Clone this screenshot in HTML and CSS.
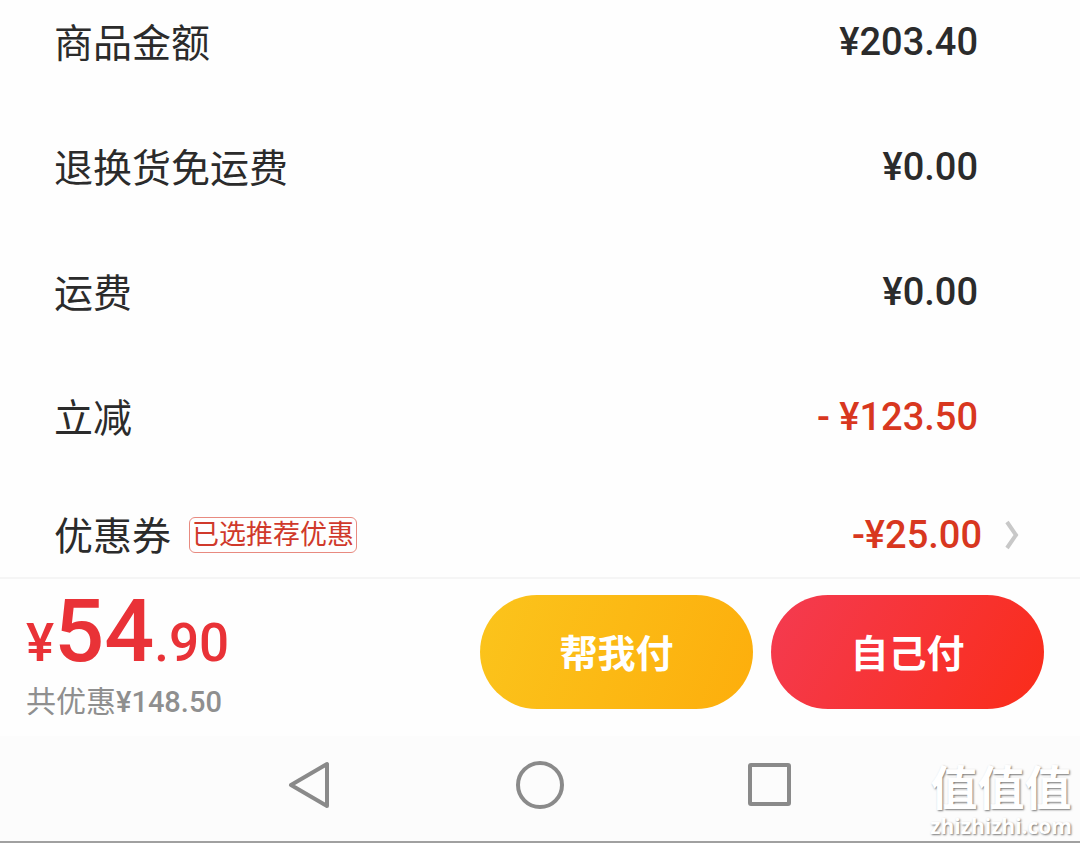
FILE: index.html
```html
<!DOCTYPE html>
<html lang="zh-CN">
<head>
    <meta charset="UTF-8">
    <meta name="viewport" content="width=device-width, initial-scale=1.0">
    <title>确认订单</title>
    <link rel="stylesheet" href="styles.css">
</head>
<body>
    <main class="summary">
        <div class="row">
            <span class="label">商品金额</span>
            <span class="amount">¥203.40</span>
        </div>
        <div class="row">
            <span class="label">退换货免运费</span>
            <span class="amount">¥0.00</span>
        </div>
        <div class="row">
            <span class="label">运费</span>
            <span class="amount">¥0.00</span>
        </div>
        <div class="row">
            <span class="label">立减</span>
            <span class="amount discount">- ¥123.50</span>
        </div>
        <a class="row coupon" href="#coupon">
            <span class="label">优惠券</span>
            <span class="tag">已选推荐优惠</span>
            <span class="amount discount">-¥25.00</span>
            <svg class="arrow" width="16" height="32" viewBox="0 0 16 32" fill="none" stroke="#c8c8c8" stroke-width="4">
                <path d="M3 3l9 13-9 13"/>
            </svg>
        </a>
    </main>

    <footer class="pay-bar">
        <div class="total">
            <div class="price">¥<span class="price-int">54</span>.90</div>
            <div class="saved">共优惠<span class="saved-num">¥148.50</span></div>
        </div>
        <button class="pay-btn pay-friend" type="button">帮我付</button>
        <button class="pay-btn pay-self" type="button">自己付</button>
    </footer>

    <nav class="system-nav">
        <button type="button" aria-label="返回">
            <svg width="56" height="56" viewBox="0 0 56 56">
                <path d="M45 7v42L9 28z"/>
            </svg>
        </button>
        <button type="button" aria-label="主页">
            <svg width="56" height="56" viewBox="0 0 56 56">
                <circle cx="28" cy="28" r="22"/>
            </svg>
        </button>
        <button type="button" aria-label="最近任务">
            <svg width="56" height="56" viewBox="0 0 56 56">
                <rect x="8" y="8" width="39" height="39" rx="1"/>
            </svg>
        </button>
        <div class="watermark">
            <span class="watermark-name">值值值</span>
            <span class="watermark-site">zhizhizhi.com</span>
        </div>
    </nav>
</body>
</html>
```

FILE: styles.css
```css
* {
    box-sizing: border-box;
}
body {
    margin: 0;
    min-height: 100vh;
    display: flex;
    flex-direction: column;
    background: #fefefe;
    color: #2b2b2b;
    font-family: Roboto, "Noto Sans CJK SC", sans-serif;
}
.summary {
    padding: 14px 60px 14px 54px;
}
.row {
    display: flex;
    align-items: center;
    height: 56px;
    margin-bottom: 69px;
    padding-right: 42px;
    color: inherit;
    text-decoration: none;
}
.row.coupon {
    margin-top: -7px;
    margin-bottom: 0;
    padding-right: 0;
}
.label {
    padding-bottom: 4px;
    font-size: 39px;
    line-height: 52px;
    font-family: "Noto Sans CJK SC", sans-serif;
}
.amount {
    margin-left: auto;
    font-size: 38px;
    font-weight: 500;
    line-height: 56px;
}
.discount {
    color: #d8371f;
}
.tag {
    margin-left: 18px;
    padding: 0 2px 4px;
    border: 1px solid #e88a80;
    border-radius: 6px;
    color: #d0392b;
    font-family: "Noto Sans CJK SC", sans-serif;
    font-size: 27px;
    line-height: 30px;
}
.arrow {
    margin-left: 22px;
}

/* bottom bar */
.pay-bar {
    display: flex;
    align-items: flex-start;
    gap: 18px;
    padding: 16px 36px 27px 26px;
    border-top: 2px solid #f5f5f5;
}
.total {
    flex: 1;
}
.price {
    height: 84px;
    color: #e93237;
    font-size: 53px;
    font-weight: 500;
    line-height: 72px;
    white-space: nowrap;
}
.price-int {
    font-size: 88px;
}
.saved {
    height: 30px;
    color: #8f8f8f;
    font-family: "Noto Sans CJK SC", sans-serif;
    font-size: 30px;
    line-height: 40px;
}
.saved-num {
    font-family: Roboto, sans-serif;
    font-size: 29px;
    font-weight: 500;
    line-height: 1;
}
.pay-btn {
    width: 273px;
    height: 114px;
    padding: 0 0 4px;
    border: none;
    border-radius: 57px;
    color: #fff;
    font-family: "Noto Sans CJK SC", sans-serif;
    font-size: 38px;
    font-weight: bold;
    cursor: pointer;
}
.pay-friend {
    background: linear-gradient(110deg, #fbc41c, #fdae0c);
}
.pay-self {
    background: linear-gradient(120deg, #f43b51, #fa2c19);
}

/* system navigation */
.system-nav {
    position: relative;
    flex: 1;
    display: flex;
    align-items: center;
    justify-content: center;
    gap: 174px;
    min-height: 100px;
    padding-bottom: 8px;
    background: #fcfcfc;
    border-bottom: 2px solid #a0a0a0;
}
.system-nav button {
    padding: 0;
    border: none;
    background: none;
}
.system-nav svg {
    display: block;
    fill: none;
    stroke: #8a8a8a;
    stroke-width: 4;
    stroke-linejoin: round;
}
.watermark {
    position: absolute;
    right: 8px;
    bottom: 0;
    display: flex;
    flex-direction: column;
    align-items: center;
    color: #fff;
    text-shadow: 1px 1px 2px #777;
    pointer-events: none;
}
.watermark-name {
    font-family: "Noto Sans CJK SC", sans-serif;
    font-size: 47px;
    font-weight: bold;
    line-height: 52px;
}
.watermark-site {
    font-family: "Open Sans", sans-serif;
    font-size: 21px;
    font-weight: bold;
    line-height: 30px;
}
```
